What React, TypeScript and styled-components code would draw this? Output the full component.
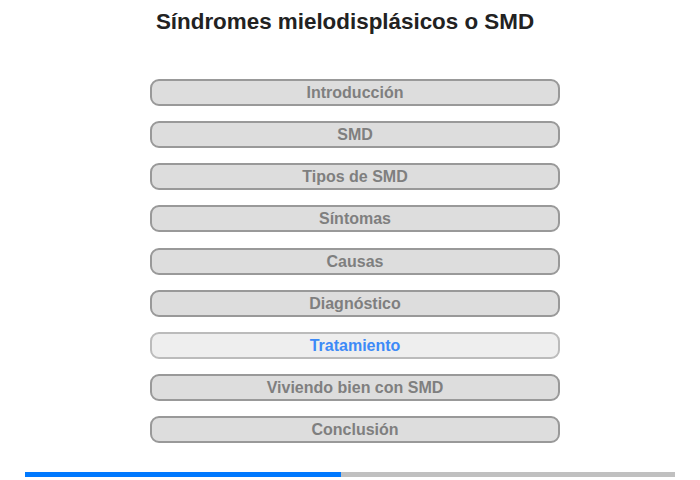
import styled, { createGlobalStyle } from "styled-components";

const items = [
  "Introducción",
  "SMD",
  "Tipos de SMD",
  "Síntomas",
  "Causas",
  "Diagnóstico",
  "Tratamiento",
  "Viviendo bien con SMD",
  "Conclusión",
];

const activeIndex = 6;
const progress = 48.6;

export default function App() {
  return (
    <>
      <GlobalStyle />
      <Page>
        <Title>Síndromes mielodisplásicos o SMD</Title>
        <Menu>
          {items.map((label, i) => (
            <MenuButton key={label} $active={i === activeIndex}>
              {label}
            </MenuButton>
          ))}
        </Menu>
        <Progress>
          <ProgressFill style={{ width: `${progress}%` }} />
        </Progress>
      </Page>
    </>
  );
}

const GlobalStyle = createGlobalStyle`
  body {
    margin: 0;
    background: #ffffff;
    font-family: "Liberation Sans", Arial, sans-serif;
  }
`;

const Page = styled.div`
  width: 700px;
  height: 480px;
  display: flex;
  flex-direction: column;
`;

const Title = styled.h1`
  margin: 9px 0 0 0;
  height: 26px;
  line-height: 26px;
  font-size: 22.4px;
  font-weight: bold;
  color: #222222;
  text-align: center;
  transform: translateX(-5px);
`;

const Menu = styled.div`
  display: flex;
  flex-direction: column;
  gap: 15.13px;
  padding-left: 150px;
  margin-top: 44px;
`;

const MenuButton = styled.div<{ $active: boolean }>`
  box-sizing: border-box;
  width: 410px;
  height: 27px;
  border: 2px solid ${(p) => (p.$active ? "#bbbbbb" : "#999999")};
  border-radius: 9px;
  background: ${(p) => (p.$active ? "#eeeeee" : "#dddddd")};
  color: ${(p) => (p.$active ? "#3d8af7" : "#7f7f7f")};
  font-size: 16px;
  font-weight: bold;
  line-height: 23px;
  text-align: center;
`;

const Progress = styled.div`
  margin: 29px 25px 0 25px;
  height: 5px;
  background: #c0c0c0;
  display: flex;
`;

const ProgressFill = styled.div`
  height: 100%;
  background: #0079ff;
`;
